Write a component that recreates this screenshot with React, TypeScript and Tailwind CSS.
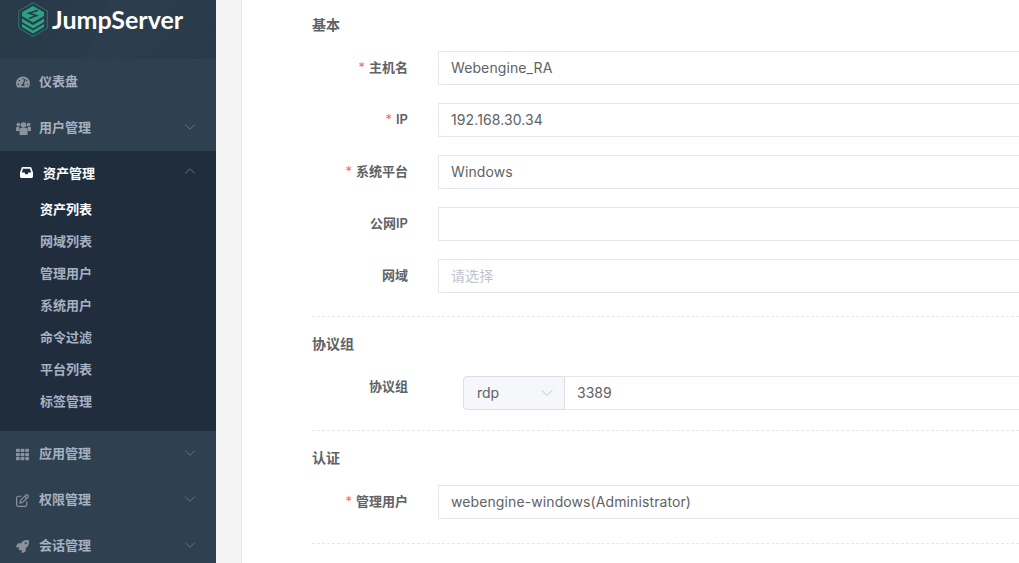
import { ChevronDown, ChevronUp } from 'lucide-react';
import { FaRocket, FaTachometerAlt, FaTh } from 'react-icons/fa';
import { FaRegPenToSquare } from 'react-icons/fa6';
import type { ReactNode } from 'react';

const cjk = "font-['Inter','Noto_Sans_CJK_SC',sans-serif]";

function Logo() {
  return (
    <svg width="30" height="36" viewBox="0 0 30 36" className="mt-[2px] shrink-0">
      <path d="M15 .7 L29.3 9 V26 L15 34.5 L.7 26 V9 Z" fill="none" stroke="#2f6a6e" strokeWidth="1.2" />
      <path d="M15 4 L26 10.3 V14 L15 20.5 L4 14 V10.3 Z" fill="#2ba383" />
      <path d="M4 16.5 L15 23 L26 16.5 V20 L15 26.5 L4 20 Z" fill="#2ba383" />
      <path d="M4 22 L15 28.5 L26 22 V25 L15 31.5 L4 25 Z" fill="#2ba383" />
      <path d="M20 8.2 L11 11.3 L18.5 13.5 L11 16.5" fill="none" stroke="#293a4a" strokeWidth="1.7" />
    </svg>
  );
}

// fa-users and fa-inbox from the old icon font, the newer packs draw them differently
function UsersIcon() {
  return (
    <svg width="15" height="13" viewBox="0 0 15 13" fill="currentColor">
      <circle cx="7.5" cy="3" r="2.8" />
      <circle cx="2.4" cy="2.6" r="1.9" />
      <circle cx="12.6" cy="2.6" r="1.9" />
      <path d="M3.5 7.2 Q3.5 6 5 6 H10 Q11.5 6 11.5 7.2 V13 H3.5 Z" />
      <path d="M0 5.6 Q0 5 1 5 H3.4 V9 H0 Z M11.6 5 H14 Q15 5 15 5.6 V9 H11.6 Z" />
    </svg>
  );
}

function InboxIcon() {
  return (
    <svg width="13" height="11" viewBox="0 0 13 11" fill="currentColor">
      <path fillRule="evenodd" d="M2.6 0 H10.4 Q11 0 11.3 .6 L13 5.4 V9.6 Q13 11 11.6 11 H1.4 Q0 11 0 9.6 V5.4 L1.7 .6 Q2 0 2.6 0 Z M3 1.8 L1.8 5.5 H4.6 L5.4 7.2 H7.6 L8.4 5.5 H11.2 L10 1.8 Z" />
    </svg>
  );
}

function NavItem({ icon, label }: { icon: ReactNode; label: string }) {
  return (
    <div className="flex h-[46px] items-center pl-4 pr-[17px] text-[13px] font-semibold text-[#a7b1c2]">
      <span className="flex w-[23px] shrink-0 text-[#8b929b]">{icon}</span>
      <span className="flex-1">{label}</span>
      {label !== '仪表盘' && <ChevronDown size={18} absoluteStrokeWidth strokeWidth={1} className="-mt-[3px] text-[#66727f]" />}
    </div>
  );
}

function Sidebar() {
  const subItems = ['网域列表', '管理用户', '系统用户', '命令过滤', '平台列表', '标签管理'];
  return (
    <aside className="w-[216px] shrink-0 bg-[#2f4050]">
      <div className="flex h-[59px] items-start gap-1 bg-[linear-gradient(115deg,#283948_0%,#2a3b4b_45%,#2c3d4d_46%,#293a4a_100%)] pl-[18px]">
        <Logo />
        <span className="text-[25px] leading-[38px] font-bold text-white font-['Lato',sans-serif]">JumpServer</span>
      </div>
      <NavItem icon={<FaTachometerAlt size={14} />} label="仪表盘" />
      <NavItem icon={<UsersIcon />} label="用户管理" />
      <div className="h-[280px] bg-[#1f2d3d]">
        <div className="flex h-[43px] items-center pl-5 pr-[17px] text-[13px] font-semibold text-white">
          <span className="flex w-[23px] shrink-0"><InboxIcon /></span>
          <span className="flex-1 pt-[2px]">资产管理</span>
          <ChevronUp size={18} absoluteStrokeWidth strokeWidth={1} className="-mt-[3px] text-[#66727f]" />
        </div>
        <div className="pl-10 text-[13px] font-semibold text-[#a7b1c2]">
          <div className="flex h-8 items-center text-white">资产列表</div>
          {subItems.map((item) => (
            <div key={item} className="flex h-8 items-center">{item}</div>
          ))}
        </div>
      </div>
      <NavItem icon={<FaTh size={13} />} label="应用管理" />
      <NavItem icon={<FaRegPenToSquare size={13} />} label="权限管理" />
      <NavItem icon={<FaRocket size={13} />} label="会话管理" />
    </aside>
  );
}

function FormRow({ label, required, children, className }: { label: string; required?: boolean; children: ReactNode; className?: string }) {
  return (
    <div className={`flex h-[34px] gap-[30px] ${className ?? ''}`}>
      <label className="w-[96px] shrink-0 text-right text-[13px] leading-[32px] font-semibold text-[#606266]">
        {required && <span className="mr-1 font-normal text-[#f56c6c]">*</span>}
        {label}
      </label>
      {children}
    </div>
  );
}

function TextBox({ value, placeholder }: { value?: string; placeholder?: string }) {
  return (
    <div className={`h-[34px] w-[700px] shrink-0 border border-[#e4e7ed] bg-white pl-3 text-sm leading-[32px] tracking-[0.1px] ${placeholder ? 'text-[#c0c4cc]' : 'text-[#606266]'}`}>
      {value ?? placeholder}
    </div>
  );
}

function SectionTitle({ children, className }: { children: ReactNode; className?: string }) {
  return <h3 className={`text-sm leading-5 font-semibold text-[#606266] ${className ?? ''}`}>{children}</h3>;
}

function Divider({ className }: { className?: string }) {
  return <div className={`border-t border-dashed border-[#e6e8ec] ${className ?? ''}`} />;
}

export default function App() {
  return (
    <div className={`flex h-[563px] w-[1019px] overflow-hidden bg-[#f3f3f4] ${cjk}`}>
      <Sidebar />
      <main className="ml-[25px] flex-1 overflow-hidden border-l border-[#e7eaec] bg-white pl-[70px]">
        <SectionTitle className="mt-[15px]">基本</SectionTitle>
        <FormRow label="主机名" required className="mt-4"><TextBox value="Webengine_RA" /></FormRow>
        <FormRow label="IP" required className="mt-[18px]"><TextBox value="192.168.30.34" /></FormRow>
        <FormRow label="系统平台" required className="mt-[18px]"><TextBox value="Windows" /></FormRow>
        <FormRow label="公网IP" className="mt-[18px]"><TextBox value="" /></FormRow>
        <FormRow label="网域" className="mt-[18px]"><TextBox placeholder="请选择" /></FormRow>
        <Divider className="mt-[23px]" />
        <SectionTitle className="mt-[17px]">协议组</SectionTitle>
        <FormRow label="协议组" className="mt-[22px] [&>label]:leading-[21px]">
          <div className="ml-[25px] flex h-[34px] w-[700px] shrink-0 text-sm text-[#606266]">
            <div className="flex w-[102px] items-center justify-between rounded-l border border-[#dcdfe6] bg-[#f5f7fa] pr-[7px] pl-[13px]">
              rdp
              <ChevronDown size={20} absoluteStrokeWidth strokeWidth={1} className="text-[#c0c4cc]" />
            </div>
            <div className="flex-1 border border-l-0 border-[#e4e7ed] pl-3 leading-[32px]">3389</div>
          </div>
        </FormRow>
        <Divider className="mt-5" />
        <SectionTitle className="mt-[17px]">认证</SectionTitle>
        <FormRow label="管理用户" required className="mt-[17px]"><TextBox value="webengine-windows(Administrator)" /></FormRow>
        <Divider className="mt-6" />
      </main>
    </div>
  );
}
